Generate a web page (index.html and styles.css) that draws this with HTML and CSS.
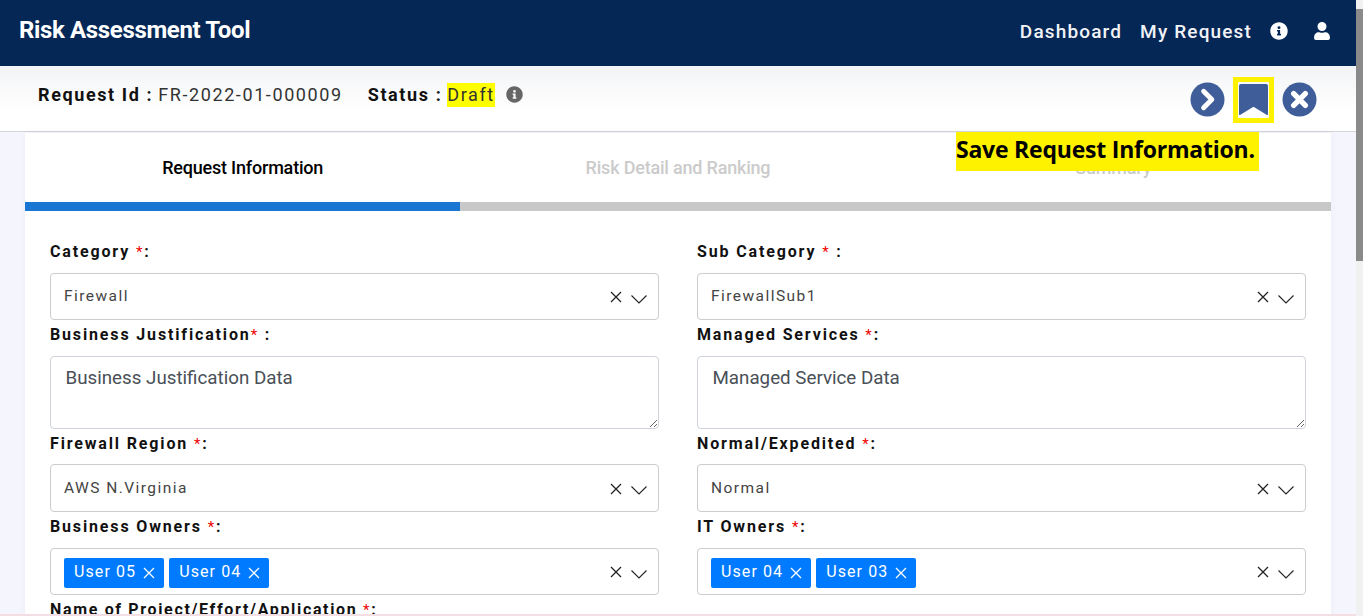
FILE: index.html
```html
<!DOCTYPE html>
<html lang="en">
<head>
  <meta charset="UTF-8">
  <title>Risk Assessment Tool</title>
  <link rel="stylesheet" href="styles.css">
</head>
<body>

<svg class="defs" width="0" height="0">
  <symbol id="ico-x" viewBox="0 0 12 12"><path d="M1 1l10 10M11 1L1 11" fill="none" stroke="currentColor" stroke-width="1.300"/></symbol>
  <symbol id="ico-down" viewBox="0 0 16 9"><path d="M.5.500L8 8l7.500-7.500" fill="none" stroke="currentColor" stroke-width="1.100"/></symbol>
</svg>

<div class="page">
  <header class="topbar">
    <div class="brand">Risk Assessment Tool</div>
    <nav class="topnav">
      <a>Dashboard</a>
      <a>My Request</a>
      <svg class="nav-icon" viewBox="0 0 512 512"><path fill="#fff" d="M256 8C119 8 8 119 8 256s111 248 248 248 248-111 248-248S393 8 256 8zm0 110a42 42 0 1 1 0 84 42 42 0 0 1 0-84zm56 254c0 7-5 12-12 12h-88c-7 0-12-5-12-12v-24c0-7 5-12 12-12h12v-64h-12c-7 0-12-5-12-12v-24c0-7 5-12 12-12h64c7 0 12 5 12 12v100h12c7 0 12 5 12 12z"/></svg>
      <svg class="nav-icon user" viewBox="0 0 448 512"><path fill="#fff" d="M224 256a128 128 0 1 0 0-256 128 128 0 0 0 0 256zm90 32h-17a174 174 0 0 1-146 0h-17C60 288 0 348 0 422v42c0 27 21 48 48 48h352c27 0 48-21 48-48v-42c0-74-60-134-134-134z"/></svg>
    </nav>
  </header>

  <div class="subbar">
    <div class="req-info">
      <b>Request Id :</b> <span class="req-id">FR-2022-01-000009</span>
      <b>Status :</b> <mark>Draft</mark>
      <svg class="info-icon" viewBox="0 0 512 512"><path fill="#666" d="M256 8C119 8 8 119 8 256s111 248 248 248 248-111 248-248S393 8 256 8zm0 110a42 42 0 1 1 0 84 42 42 0 0 1 0-84zm56 254c0 7-5 12-12 12h-88c-7 0-12-5-12-12v-24c0-7 5-12 12-12h12v-64h-12c-7 0-12-5-12-12v-24c0-7 5-12 12-12h64c7 0 12 5 12 12v100h12c7 0 12 5 12 12z"/></svg>
    </div>
    <div class="actions">
      <svg class="act-icon" viewBox="0 0 36 36"><circle cx="18" cy="18" r="17.500" fill="#3f5d99"/><path d="M14 9.500l8.500 8.500-8.500 8.500" fill="none" stroke="#fff" stroke-width="5" stroke-linecap="round" stroke-linejoin="round"/></svg>
      <span class="save-box">
        <svg viewBox="0 0 30 32" class="save-icon"><path fill="#3f5d99" d="M2 0h26a2 2 0 0 1 2 2v29a1 1 0 0 1-1.500.8L15 23.500 1.500 31.800A1 1 0 0 1 0 31V2a2 2 0 0 1 2-2z"/></svg>
      </span>
      <svg class="act-icon" viewBox="0 0 36 36"><circle cx="18" cy="18" r="17.500" fill="#3f5d99"/><path d="M12 12l12 12M24 12L12 24" fill="none" stroke="#fff" stroke-width="5.500" stroke-linecap="round"/></svg>
    </div>
  </div>

  <div class="save-note">Save Request Information.</div>

  <main class="card">
    <div class="tabs">
      <div class="tab active">Request Information</div>
      <div class="tab">Risk Detail and Ranking</div>
      <div class="tab">Summary</div>
    </div>
    <div class="progress"><div class="progress-fill"></div></div>

    <form class="form-grid">
      <div class="field">
        <label>Category <i>*</i>:</label>
        <div class="select"><span class="value">Firewall</span><span class="controls"><svg class="clear"><use href="#ico-x"/></svg><svg class="chev"><use href="#ico-down"/></svg></span></div>
      </div>
      <div class="field">
        <label>Sub Category <i>*</i> :</label>
        <div class="select"><span class="value">FirewallSub1</span><span class="controls"><svg class="clear"><use href="#ico-x"/></svg><svg class="chev"><use href="#ico-down"/></svg></span></div>
      </div>
      <div class="field">
        <label>Business Justification<i>*</i> :</label>
        <textarea class="area">Business Justification Data</textarea>
      </div>
      <div class="field">
        <label>Managed Services <i>*</i>:</label>
        <textarea class="area">Managed Service Data</textarea>
      </div>
      <div class="field">
        <label class="short">Firewall Region <i>*</i>:</label>
        <div class="select tall"><span class="value">AWS N.Virginia</span><span class="controls"><svg class="clear"><use href="#ico-x"/></svg><svg class="chev"><use href="#ico-down"/></svg></span></div>
      </div>
      <div class="field">
        <label class="short">Normal/Expedited <i>*</i>:</label>
        <div class="select tall"><span class="value">Normal</span><span class="controls"><svg class="clear"><use href="#ico-x"/></svg><svg class="chev"><use href="#ico-down"/></svg></span></div>
      </div>
      <div class="field">
        <label>Business Owners <i>*</i>:</label>
        <div class="select"><span class="tags"><span class="tag">User 05 <svg class="tag-x"><use href="#ico-x"/></svg></span><span class="tag">User 04 <svg class="tag-x"><use href="#ico-x"/></svg></span></span><span class="controls"><svg class="clear"><use href="#ico-x"/></svg><svg class="chev"><use href="#ico-down"/></svg></span></div>
      </div>
      <div class="field">
        <label>IT Owners <i>*</i>:</label>
        <div class="select"><span class="tags"><span class="tag">User 04 <svg class="tag-x"><use href="#ico-x"/></svg></span><span class="tag">User 03 <svg class="tag-x"><use href="#ico-x"/></svg></span></span><span class="controls"><svg class="clear"><use href="#ico-x"/></svg><svg class="chev"><use href="#ico-down"/></svg></span></div>
      </div>
      <div class="field">
        <label class="name-label">Name of Project/Effort/Application <i>*</i>:</label>
      </div>
    </form>
  </main>
</div>

<div class="scrollbar"><div class="thumb"></div></div>

</body>
</html>
```

FILE: styles.css
```css
html, body {
  margin: 0;
  height: 616px;
  overflow: hidden;
}
body {
  background: #f5f6fd;
  font-family: Roboto, "Liberation Sans", sans-serif;
  color: #111;
  display: flex;
}
.defs {
  display: block;
  width: 0;
  height: 0;
}
.page {
  position: relative;
  width: 1356px;
  height: 614px;
  overflow: hidden;
  border-bottom: 2px solid #f3dfe3;
}
.scrollbar {
  width: 7px;
  height: 616px;
  background: #f1f1f1;
}
.thumb {
  height: 252px;
  margin-top: 9px;
  background: #8a8a8a;
}

.topbar {
  height: 66px;
  background: #052756;
  color: #fff;
  display: flex;
  justify-content: space-between;
  align-items: flex-start;
}
.brand {
  font-size: 24px;
  font-weight: 700;
  letter-spacing: -0.35px;
  margin: 16px 0 0 19px;
  line-height: 28px;
}
.topnav {
  display: flex;
  align-items: center;
  height: 62px;
  font-size: 19px;
  font-weight: 500;
  letter-spacing: 1.15px;
  color: #f2f3f6;
  padding-right: 26px;
}
.topnav a {
  margin-right: 18px;
}
.nav-icon {
  width: 18px;
  height: 18px;
}
.nav-icon.user {
  width: 16px;
  margin-left: 26px;
}

.subbar {
  height: 65px;
  background: linear-gradient(#f3f4f6, #fff 70%);
  border-bottom: 1px solid #d3d3d8;
  display: flex;
  justify-content: space-between;
}
.req-info {
  margin: 17px 0 0 38px;
  font-size: 18px;
  line-height: 24px;
  letter-spacing: 1.6px;
  display: flex;
  align-items: flex-start;
}
.req-info b {
  font-weight: 700;
  margin-right: 5px;
}
.req-id {
  color: #333;
  margin-right: 25px;
}
mark {
  background: #ffff00;
  color: #333;
}
.info-icon {
  width: 17px;
  height: 17px;
  margin: 3px 0 0 11px;
}
.actions {
  display: flex;
  align-items: center;
  gap: 8px;
  margin: 10px 39px 0 0;
  height: 47px;
}
.act-icon {
  width: 35px;
  height: 35px;
}
.save-box {
  width: 41px;
  height: 46px;
  box-sizing: border-box;
  border: 5px solid #fff200;
  display: flex;
  align-items: center;
  justify-content: center;
}
.save-icon {
  width: 29px;
  height: 31px;
}

.save-note {
  position: absolute;
  left: 956px;
  top: 132px;
  width: 303px;
  height: 39px;
  background: #fff200;
  color: #000;
  font-family: "Open Sans", sans-serif;
  font-weight: 700;
  font-size: 23px;
  line-height: 34px;
  letter-spacing: -0.22px;
  white-space: nowrap;
}

.card {
  margin: 1px 25px 0;
  background: #fff;
  height: 520px;
  box-shadow: 0 0 8px rgba(0, 0, 0, 0.04);
}
.tabs {
  display: grid;
  grid-template-columns: repeat(3, 1fr);
  height: 69px;
}
.tab {
  text-align: center;
  font-size: 18px;
  font-weight: 500;
  letter-spacing: -0.2px;
  line-height: 70px;
  color: #cbcbcb;
}
.tab.active {
  color: #000;
}
.progress {
  height: 9px;
  background: #c8c8c8;
}
.progress-fill {
  width: 435px;
  height: 9px;
  background: #1976d2;
}

.form-grid {
  display: grid;
  grid-template-columns: 609px 609px;
  column-gap: 38px;
  padding: 26px 25px 0;
}
.field label {
  display: block;
  height: 36px;
  box-sizing: border-box;
  padding-top: 6px;
  font-size: 16px;
  line-height: 18px;
  font-weight: 700;
  letter-spacing: 1.85px;
  color: #111;
}
.field label.short {
  height: 35px;
}
.field label.name-label {
  letter-spacing: 1.66px;
}
.field label i {
  color: #e00;
  font-style: normal;
  font-weight: 400;
  font-size: 15px;
}
.select {
  height: 47px;
  box-sizing: border-box;
  border: 1px solid #ccc;
  border-radius: 4px;
  display: flex;
  align-items: center;
  justify-content: space-between;
  padding: 0 11px 0 13px;
}
.select.tall {
  height: 48px;
}
.value {
  font-size: 15.500px;
  letter-spacing: 1.45px;
  color: #444;
  margin-top: -2px;
}
.tall .value {
  margin-top: -1px;
}
.controls {
  display: flex;
  align-items: center;
  gap: 9px;
  color: #222;
}
.clear {
  width: 12px;
  height: 12px;
  margin-top: 1px;
}
.chev {
  width: 16px;
  height: 9px;
  margin-top: 5px;
}
.area {
  display: block;
  width: 100%;
  height: 73px;
  box-sizing: border-box;
  border: 1px solid #ced4da;
  border-radius: 4px;
  padding: 9px 14.500px;
  font-family: Roboto, sans-serif;
  font-size: 18.750px;
  line-height: 24px;
  color: #495057;
  margin: 0;
}
.tags {
  display: flex;
  gap: 5px;
  margin-top: 2px;
}
.tag {
  background: #007bff;
  color: #fff;
  border-radius: 2px;
  height: 30px;
  padding: 0 9px 0 10px;
  font-size: 16px;
  line-height: 28px;
  letter-spacing: 1.1px;
  display: flex;
  align-items: flex-start;
  gap: 7px;
}
.tag-x {
  width: 12px;
  height: 12px;
  margin-top: 9px;
}
```
